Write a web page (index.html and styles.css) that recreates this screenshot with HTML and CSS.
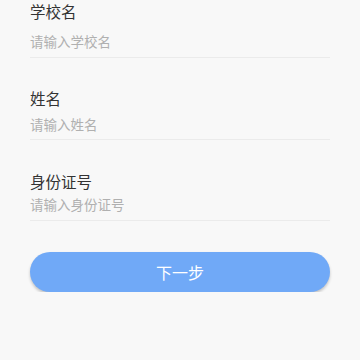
FILE: index.html
```html
<!DOCTYPE html>
<html lang="zh">
<head>
<meta charset="utf-8">
<link rel="stylesheet" href="styles.css">
</head>
<body>
<div class="form">
  <div class="field field-first">
    <div class="label">学校名</div>
    <div class="input input-a">请输入学校名</div>
  </div>
  <div class="field">
    <div class="label">姓名</div>
    <div class="input input-b">请输入姓名</div>
  </div>
  <div class="field">
    <div class="label">身份证号</div>
    <div class="input input-c">请输入身份证号</div>
  </div>
  <div class="btn">下一步</div>
</div>
</body>
</html>
```
FILE: styles.css
```css
html, body {
  margin: 0;
  padding: 0;
  background: #f8f8f8;
  font-family: "Noto Sans CJK SC", "Noto Sans", sans-serif;
}
.form {
  padding: 0 30px;
  display: flex;
  flex-direction: column;
}
.field {
  margin-top: 29.5px;
  padding-bottom: 6.5px;
  border-bottom: 1px solid #ebebeb;
}
.field-first {
  margin-top: 0;
}
.label {
  font-size: 15.5px;
  line-height: 22px;
  height: 22px;
  color: #333333;
}
.input {
  font-size: 13.5px;
  line-height: 18px;
  height: 18px;
  color: #b0b0b0;
}
.input-a { margin-top: 10px; }
.input-b { margin-top: 5.7px; }
.input-c { margin-top: 3.5px; }
.btn {
  margin-top: 31px;
  height: 40px;
  border-radius: 20px;
  background: #70a9f7;
  color: #ffffff;
  font-size: 16px;
  line-height: 40px;
  text-align: center;
  box-shadow: 0 2px 3px rgba(0, 0, 0, 0.22);
}
```
